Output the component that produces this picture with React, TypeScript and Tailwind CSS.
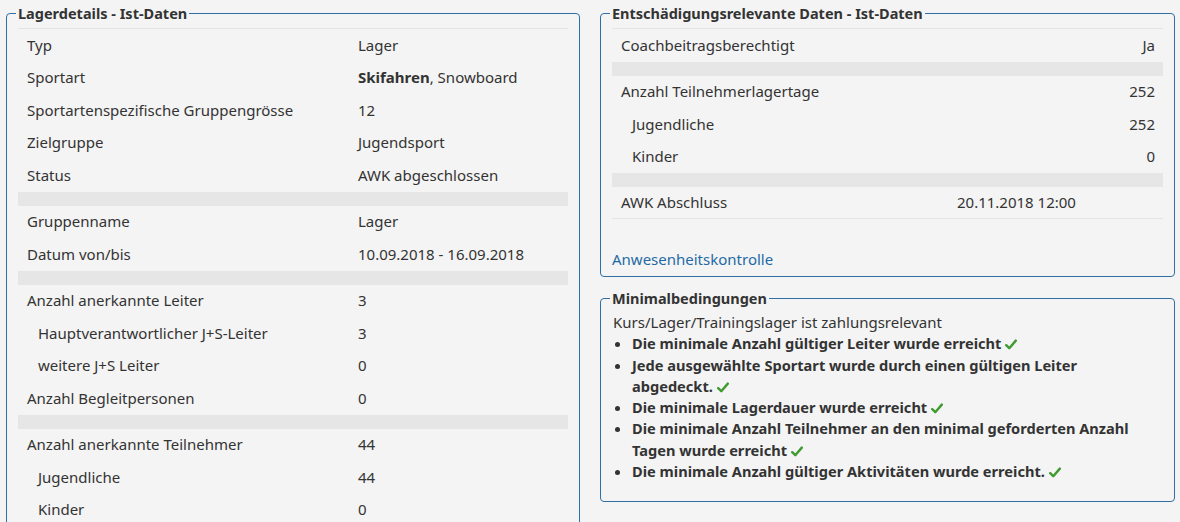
import React from "react";

type Row = { label: string; value: React.ReactNode; indent?: boolean } | "sep";

const lagerRows: Row[] = [
  { label: "Typ", value: "Lager" },
  {
    label: "Sportart",
    value: (
      <>
        <span className="font-bold">Skifahren</span>, Snowboard
      </>
    ),
  },
  { label: "Sportartenspezifische Gruppengrösse", value: "12" },
  { label: "Zielgruppe", value: "Jugendsport" },
  { label: "Status", value: "AWK abgeschlossen" },
  "sep",
  { label: "Gruppenname", value: "Lager" },
  { label: "Datum von/bis", value: "10.09.2018 - 16.09.2018" },
  "sep",
  { label: "Anzahl anerkannte Leiter", value: "3" },
  { label: "Hauptverantwortlicher J+S-Leiter", value: "3", indent: true },
  { label: "weitere J+S Leiter", value: "0", indent: true },
  { label: "Anzahl Begleitpersonen", value: "0" },
  "sep",
  { label: "Anzahl anerkannte Teilnehmer", value: "44" },
  { label: "Jugendliche", value: "44", indent: true },
  { label: "Kinder", value: "0", indent: true },
];

const entschRows: Row[] = [
  { label: "Coachbeitragsberechtigt", value: "Ja" },
  "sep",
  { label: "Anzahl Teilnehmerlagertage", value: "252" },
  { label: "Jugendliche", value: "252", indent: true },
  { label: "Kinder", value: "0", indent: true },
  "sep",
];

const bedingungen = [
  "Die minimale Anzahl gültiger Leiter wurde erreicht",
  "Jede ausgewählte Sportart wurde durch einen gültigen Leiter abgedeckt.",
  "Die minimale Lagerdauer wurde erreicht",
  "Die minimale Anzahl Teilnehmer an den minimal geforderten Anzahl Tagen wurde erreicht",
  "Die minimale Anzahl gültiger Aktivitäten wurde erreicht.",
];

function Check() {
  return (
    <svg
      className="ml-[4px] inline-block align-[-1px]"
      width="12"
      height="11"
      viewBox="0 0 12 11"
    >
      <path
        d="M1.2 6.2 L4.3 9.2 L10.8 1.6"
        fill="none"
        stroke="#3f9b2f"
        strokeWidth="2.4"
        strokeLinecap="round"
        strokeLinejoin="round"
      />
    </svg>
  );
}

function Box({
  title,
  className,
  children,
}: {
  title: string;
  className?: string;
  children: React.ReactNode;
}) {
  return (
    <fieldset
      className={`rounded-[4px] border border-[#2f6fa6] px-[11px] ${className ?? ""}`}
    >
      <legend className="ml-[-2px] px-[2px] text-[14.5px] font-bold leading-[20px] text-[#333]">
        {title}
      </legend>
      {children}
    </fieldset>
  );
}

function DataTable({ rows, rightValues }: { rows: Row[]; rightValues?: boolean }) {
  return (
    <div className="border-t border-[#e4e4e4]">
      {rows.map((row, i) =>
        row === "sep" ? (
          <div key={i} className="h-[14px] bg-[#e6e6e6]" />
        ) : (
          <div key={i} className="flex h-[32.5px] items-center pb-[1px] pl-[9px] pr-[8px]">
            <div
              className={`${rightValues ? "flex-1" : "w-[331px]"} ${row.indent ? "pl-[11px]" : ""}`}
            >
              {row.label}
            </div>
            <div className={rightValues ? "text-right" : ""}>{row.value}</div>
          </div>
        ),
      )}
    </div>
  );
}

export default function App() {
  return (
    <div
      className="min-h-screen bg-[#f4f4f4] pl-[6px] pr-[5px] pt-[3px] text-[15px] text-[#333]"
      style={{ fontFamily: '"Noto Sans", "Open Sans", sans-serif' }}
    >
      <div className="flex gap-[20px]">
        <Box title="Lagerdetails - Ist-Daten" className="w-[574px] pt-[5px] pb-[10px]">
          <DataTable rows={lagerRows} />
        </Box>

        <div className="flex w-[575px] flex-col gap-[11px]">
          <Box title="Entschädigungsrelevante Daten - Ist-Daten" className="pt-[5px] pb-[7px]">
            <div className="border-b border-[#e4e4e4]">
              <DataTable rows={entschRows} rightValues />
              <div className="flex h-[31px] items-center pb-[1px] pl-[9px]">
                <div className="w-[336px]">AWK Abschluss</div>
                <div>20.11.2018 12:00</div>
              </div>
            </div>
            <div className="mt-[30px] leading-[20px]">
              <a className="text-[#1f6aa5]" href="#">
                Anwesenheitskontrolle
              </a>
            </div>
          </Box>

          <Box title="Minimalbedingungen" className="pt-[4px] pb-[19px]">
            <div className="pl-[1px] leading-[21.3px]">
              <div>Kurs/Lager/Trainingslager ist zahlungsrelevant</div>
              <ul className="list-disc pl-[19px] text-[14.6px] font-bold">
                {bedingungen.map((b) => (
                  <li key={b} className="pr-[20px]">
                    {b}
                    <Check />
                  </li>
                ))}
              </ul>
            </div>
          </Box>
        </div>
      </div>
    </div>
  );
}
